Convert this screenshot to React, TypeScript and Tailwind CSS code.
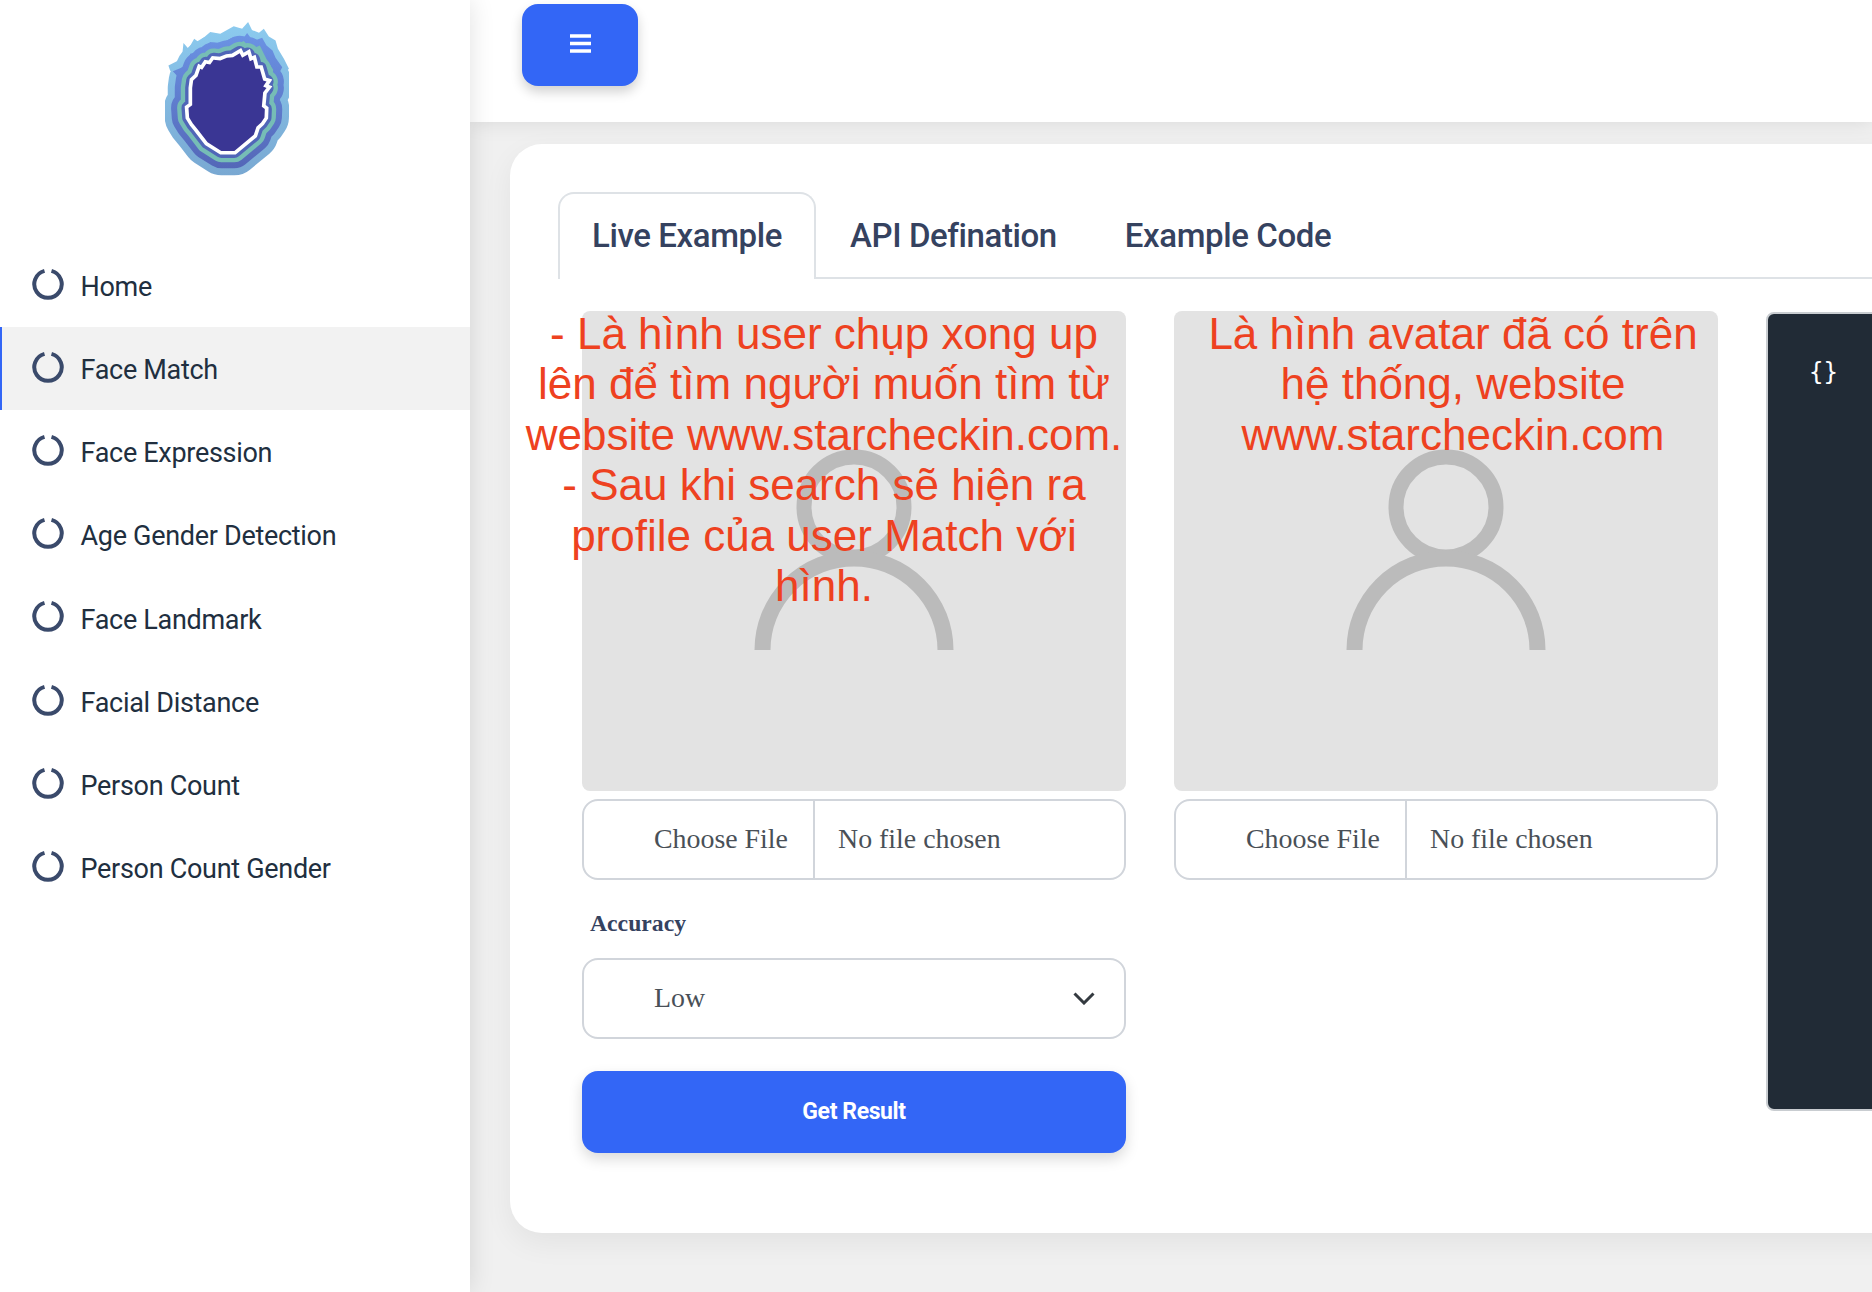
const navItems = [
  "Home",
  "Face Match",
  "Face Expression",
  "Age Gender Detection",
  "Face Landmark",
  "Facial Distance",
  "Person Count",
  "Person Count Gender",
];

function RingIcon() {
  return (
    <svg width="32" height="32" viewBox="0 0 32 32" className="mt-[-7px] shrink-0">
      <path d="M12.5 2.9 A13.7 13.7 0 1 0 19.5 2.9" fill="none" stroke="#3a4a6b" strokeWidth="4" />
    </svg>
  );
}

const headPath =
  "M218,368 L207,350 L205,322 L216,314 L216,262 L219,240 L232,228 L240,205 L246,208 L258,190 L270,192 L280,178 L300,180 L320,172 L338,170 L358,158 L365,172 L382,162 L388,182 L398,178 L405,205 L418,205 L428,240 L438,243 L428,258 L438,262 L428,275 L424,318 L433,325 L432,350 L422,365 L408,378 L400,402 L342,450 L303,450 L262,424 L232,385 Z";

function Logo() {
  return (
    <svg width="124" height="154" viewBox="135 65 370 460">
      <defs>
        <linearGradient id="outerGrad" gradientUnits="userSpaceOnUse" x1="0" y1="65" x2="0" y2="525">
          <stop offset="0" stopColor="#8ccbef" />
          <stop offset="1" stopColor="#79a8d2" />
        </linearGradient>
        <linearGradient id="midGrad" gradientUnits="userSpaceOnUse" x1="0" y1="100" x2="0" y2="500">
          <stop offset="0" stopColor="#6b93e4" />
          <stop offset="1" stopColor="#5467b8" />
        </linearGradient>
      </defs>
      <g fill="none" strokeLinejoin="round">
        <path d={headPath} stroke="url(#outerGrad)" strokeWidth="146" />
        <polygon fill="url(#outerGrad)" points="150,210 145,195 185,175 190,128 205,145 222,115 235,125 270,95 300,100 340,78 365,85 383,65 395,90 412,100 430,85 445,108 465,120 472,145 490,175 505,205 495,215 505,235 490,260 400,260 200,260" />
        <path d={headPath} stroke="url(#midGrad)" strokeWidth="104" />
        <polygon fill="url(#midGrad)" points="170,225 158,212 200,195 210,160 228,155 270,125 300,130 340,110 368,115 380,98 398,122 425,112 438,135 456,150 465,172 485,200 472,225 480,232 465,260 400,270 200,270" />
        <path d={headPath} stroke="#76bdb6" strokeWidth="68" />
        <polygon fill="#76bdb6" points="190,240 210,212 240,178 290,152 340,138 370,122 392,146 418,135 440,180 458,208 450,260 300,270" />
        <path d={headPath} stroke="#5066b8" strokeWidth="42" />
        <path d={headPath} stroke="#ffffff" strokeWidth="22" strokeLinejoin="miter" strokeMiterlimit="2.2" />
      </g>
      <path d={headPath} fill="#3a3694" />
    </svg>
  );
}

function Person() {
  return (
    <svg width="200" height="202" viewBox="0 0 200 202" className="mt-[138px] block">
      <circle cx="100" cy="58" r="50" fill="none" stroke="#bbbbbb" strokeWidth="15" />
      <path d="M8.5 201 A91.5 91.5 0 0 1 191.5 201" fill="none" stroke="#bbbbbb" strokeWidth="16" />
    </svg>
  );
}

function FileField() {
  return (
    <div className="mt-2 flex h-[81px] items-center rounded-2xl border-2 border-[#d1d5db] bg-white font-['Liberation_Serif',serif] text-[27.9px] text-[#495057]">
      <div className="flex h-full w-[231px] items-center justify-end border-r-2 border-[#d1d5db] pb-[2px] pr-[25px]">Choose File</div>
      <div className="pb-[2px] pl-[23px]">No file chosen</div>
    </div>
  );
}

function ImagePanel({ children }: { children: React.ReactNode }) {
  return (
    <div className="relative h-[480px] rounded-lg bg-[#e3e3e3]">
      <div className="flex justify-center">
        <Person />
      </div>
      {children}
    </div>
  );
}

export default function App() {
  return (
    <div className="flex h-[1292px] w-[1872px] overflow-hidden bg-[#f0f0f0] font-['Roboto',sans-serif]">
      <aside className="relative z-20 w-[470px] shrink-0 bg-white shadow-[0_0_24px_rgba(0,0,0,0.12)]">
        <div className="flex h-[244px] justify-start pl-[165px] pt-[22px]">
          <Logo />
        </div>
        <nav>
          {navItems.map((item) => (
            <div
              key={item}
              className={
                item === "Face Match"
                  ? "flex h-[83.2px] items-center gap-[16.5px] border-l-2 border-[#3366f6] bg-[#f2f2f2] pl-[30px] pt-[3px] text-[27px] tracking-[-0.3px] text-[#212f3f]"
                  : "flex h-[83.2px] items-center gap-[16.5px] border-l-2 border-transparent pl-[30px] pt-[3px] text-[27px] tracking-[-0.3px] text-[#212f3f]"
              }
            >
              <RingIcon />
              <span>{item}</span>
            </div>
          ))}
        </nav>
      </aside>
      <main className="min-w-0 flex-1">
        <header className="relative z-10 h-[122px] bg-white pl-[52px] pt-1 shadow-[0_0_20px_rgba(0,0,0,0.1)]">
          <button className="flex h-[82px] w-[116px] items-center justify-center rounded-2xl bg-[#3366f6] pb-1 shadow-[0_6px_12px_rgba(0,0,0,0.18)]">
            <svg width="21" height="19" viewBox="0 0 21 19">
              <path d="M0 2h21M0 9.5h21M0 17h21" stroke="#fff" strokeWidth="3.4" />
            </svg>
          </button>
        </header>
        <section className="ml-10 mt-[22px] h-[1089px] w-[1500px] rounded-[32px] bg-white pl-12 pt-12 shadow-[0_10px_30px_rgba(0,0,0,0.06)]">
          <div className="flex h-[87px] items-stretch border-b-2 border-[#dee2e6]">
            <div className="mb-[-2px] flex w-[258px] shrink-0 items-center justify-center rounded-t-2xl border-2 border-b-0 border-[#dee2e6] bg-white pb-px text-[33px] font-medium tracking-[-0.4px] text-[#35425f]">
              Live Example
            </div>
            <div className="flex items-center px-[34px] pt-[2px] text-[33px] font-medium tracking-[-0.4px] text-[#35425f]">API Defination</div>
            <div className="flex items-center px-[34px] pt-[2px] text-[33px] font-medium tracking-[-0.4px] text-[#35425f]">Example Code</div>
          </div>
          <div className="mt-[32px] flex">
            <div className="relative ml-6 w-[544px] shrink-0">
              <ImagePanel>
                <div className="absolute left-[-78px] top-[-2px] w-[640px] text-center font-['Liberation_Sans',sans-serif] text-[44px] leading-[50.4px] text-[#ee4120]">
                  - Là hình user chụp xong up
                  <br />
                  lên để tìm người muốn tìm từ
                  <br />
                  website www.starcheckin.com.
                  <br />
                  - Sau khi search sẽ hiện ra
                  <br />
                  profile của user Match với
                  <br />
                  hình.
                </div>
              </ImagePanel>
              <FileField />
              <div className="mt-[26px] pl-2 font-['Liberation_Serif',serif] text-[23.7px] font-bold text-[#35425f]">Accuracy</div>
              <div className="mt-[16px] flex h-[81px] items-center justify-between rounded-2xl border-2 border-[#d1d5db] bg-white pl-[70px] pr-[29px] font-['Liberation_Serif',serif] text-[27.9px] text-[#495057]">
                <span>Low</span>
                <svg width="22" height="13" viewBox="0 0 22 13">
                  <path d="M1.5 1.5l9.5 9.5 9.5-9.5" fill="none" stroke="#343a40" strokeWidth="3" />
                </svg>
              </div>
              <button className="mt-[32px] flex h-[82px] w-full items-center justify-center rounded-2xl bg-[#3366f6] pt-[2px] text-[23px] font-bold tracking-[-0.4px] text-white shadow-[0_6px_14px_rgba(0,0,0,0.15)]">
                Get Result
              </button>
            </div>
            <div className="ml-12 w-[544px] shrink-0">
              <ImagePanel>
                <div className="absolute left-[7px] top-[-2px] w-full text-center font-['Liberation_Sans',sans-serif] text-[44px] leading-[50.4px] text-[#ee4120]">
                  Là hình avatar đã có trên
                  <br />
                  hệ thống, website
                  <br />
                  www.starcheckin.com
                </div>
              </ImagePanel>
              <FileField />
            </div>
            <div className="ml-[48px] mt-px h-[799px] w-[500px] shrink-0 rounded-lg border-2 border-[#c9cdd1] bg-[#212b36] pl-[41px] pt-[40px] font-['DejaVu_Sans_Mono',monospace] text-[24px] text-white">
              {"{}"}
            </div>
          </div>
        </section>
      </main>
    </div>
  );
}
